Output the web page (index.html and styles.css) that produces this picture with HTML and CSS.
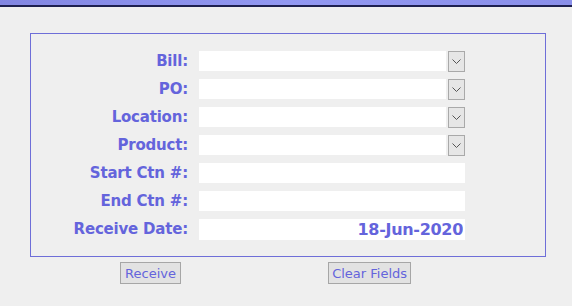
FILE: index.html
```html
<!DOCTYPE html>
<html lang="en">
<head>
  <meta charset="UTF-8">
  <title>Receive Cartons</title>
  <link rel="stylesheet" href="styles.css">
</head>
<body>
  <div class="topbar"></div>
  <div class="page">
    <form class="frame" id="receiveForm">
      <label class="lbl" for="bill">Bill:</label>
      <div class="combo">
        <input type="text" id="bill" class="field">
        <span class="drop"><svg width="9" height="5" viewBox="0 0 9 5"><path d="M0.5 0.5 L4.5 4.5 L8.5 0.5" fill="none" stroke="#555" stroke-width="1"/></svg></span>
      </div>

      <label class="lbl" for="po">PO:</label>
      <div class="combo">
        <input type="text" id="po" class="field">
        <span class="drop"><svg width="9" height="5" viewBox="0 0 9 5"><path d="M0.5 0.5 L4.5 4.5 L8.5 0.5" fill="none" stroke="#555" stroke-width="1"/></svg></span>
      </div>

      <label class="lbl" for="location">Location:</label>
      <div class="combo">
        <input type="text" id="location" class="field">
        <span class="drop"><svg width="9" height="5" viewBox="0 0 9 5"><path d="M0.5 0.5 L4.5 4.5 L8.5 0.5" fill="none" stroke="#555" stroke-width="1"/></svg></span>
      </div>

      <label class="lbl" for="product">Product:</label>
      <div class="combo">
        <input type="text" id="product" class="field">
        <span class="drop"><svg width="9" height="5" viewBox="0 0 9 5"><path d="M0.5 0.5 L4.5 4.5 L8.5 0.5" fill="none" stroke="#555" stroke-width="1"/></svg></span>
      </div>

      <label class="lbl" for="startCtn">Start Ctn #:</label>
      <input type="text" id="startCtn" class="field wide">

      <label class="lbl" for="endCtn">End Ctn #:</label>
      <input type="text" id="endCtn" class="field wide">

      <label class="lbl" for="receiveDate">Receive Date:</label>
      <input type="text" id="receiveDate" class="field wide date" value="18-Jun-2020">
    </form>

    <div class="actions">
      <button type="button" class="btn btn-receive">Receive</button>
      <button type="button" class="btn btn-clear">Clear Fields</button>
    </div>
  </div>
</body>
</html>
```

FILE: styles.css
```css
body {
  margin: 0;
  background-color: #efefef;
  font-family: 'DejaVu Sans', Tahoma, sans-serif;
  color: #6464dc;
}
.topbar {
  height: 5px;
  background: linear-gradient(to right, #8286e2, #9298f2 50%, #8a8fea);
  border-bottom: 2px solid #1e2050;
}
.page {
  padding: 26px 0 0 30px;
}
.frame {
  box-sizing: border-box;
  width: 516px;
  height: 224px;
  margin: 0;
  border: 1px solid #6e6ed8;
  padding: 17px 0 0 0;
  display: grid;
  grid-template-columns: 157px 266px;
  column-gap: 11px;
  row-gap: 8px;
  grid-auto-rows: 20px;
}
.lbl {
  font-size: 15px;
  font-weight: bold;
  letter-spacing: -0.2px;
  text-align: right;
  line-height: 20px;
  white-space: nowrap;
}
.combo {
  display: flex;
  align-items: center;
  gap: 2px;
}
.field {
  box-sizing: border-box;
  height: 20px;
  border: none;
  background-color: #fff;
  padding: 0 2px;
  margin: 0;
  outline: none;
  font-family: inherit;
}
.combo .field {
  width: 247px;
}
.drop {
  box-sizing: border-box;
  width: 17px;
  height: 21px;
  border: 1px solid #a9a9a9;
  background-color: #e6e6e6;
  display: flex;
  align-items: center;
  justify-content: center;
}
.wide {
  width: 266px;
}
.date {
  height: 21px;
  text-align: right;
  font-size: 16px;
  font-weight: bold;
  color: #6464dc;
  letter-spacing: -0.3px;
}
.actions {
  height: 30px;
  margin-top: 5px;
}
.btn {
  box-sizing: border-box;
  height: 22px;
  border: 1px solid #a6a6a6;
  background-color: #e2e2e2;
  color: #6464dc;
  font-family: 'DejaVu Sans', Tahoma, sans-serif;
  font-size: 13px;
  padding: 0;
  cursor: pointer;
}
.btn-receive {
  width: 61px;
  margin-left: 90px;
}
.btn-clear {
  width: 83px;
  margin-left: 142px;
}
```
